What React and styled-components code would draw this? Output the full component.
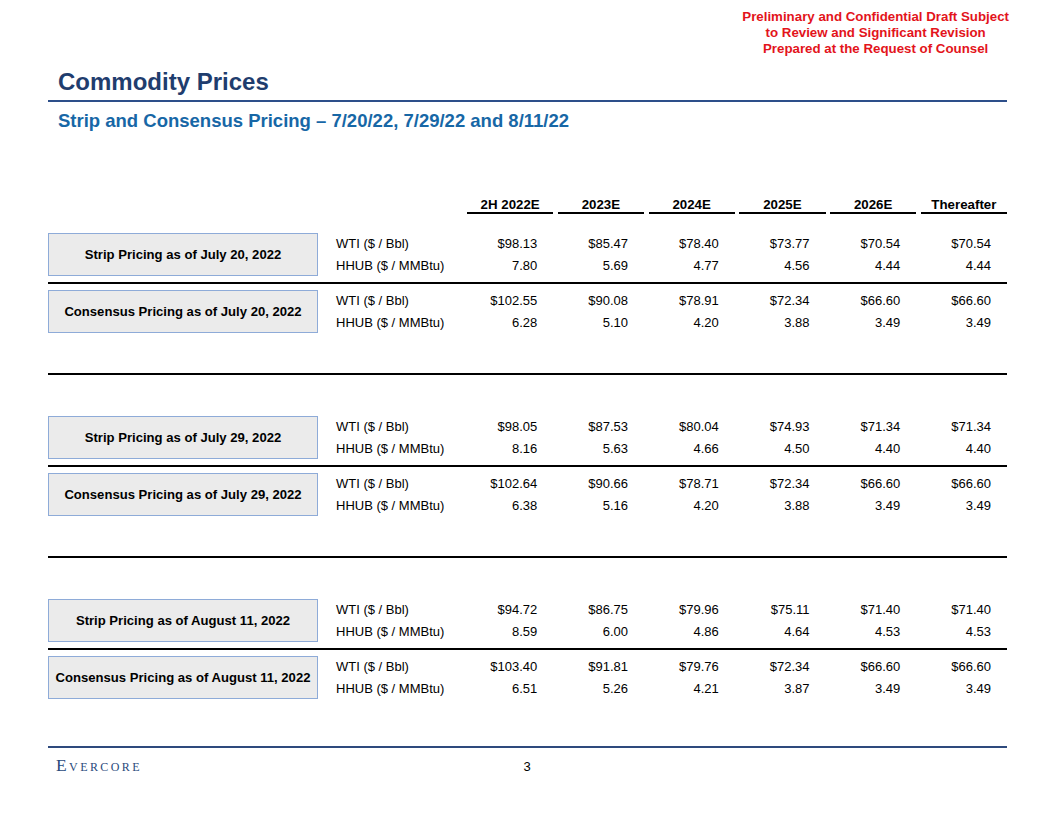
import React from "react";
import styled, { createGlobalStyle } from "styled-components";

const columns = ["2H 2022E", "2023E", "2024E", "2025E", "2026E", "Thereafter"];

const groups = [
  [
    {
      label: "Strip Pricing as of July 20, 2022",
      wti: ["$98.13", "$85.47", "$78.40", "$73.77", "$70.54", "$70.54"],
      hhub: ["7.80", "5.69", "4.77", "4.56", "4.44", "4.44"],
    },
    {
      label: "Consensus Pricing as of July 20, 2022",
      wti: ["$102.55", "$90.08", "$78.91", "$72.34", "$66.60", "$66.60"],
      hhub: ["6.28", "5.10", "4.20", "3.88", "3.49", "3.49"],
    },
  ],
  [
    {
      label: "Strip Pricing as of July 29, 2022",
      wti: ["$98.05", "$87.53", "$80.04", "$74.93", "$71.34", "$71.34"],
      hhub: ["8.16", "5.63", "4.66", "4.50", "4.40", "4.40"],
    },
    {
      label: "Consensus Pricing as of July 29, 2022",
      wti: ["$102.64", "$90.66", "$78.71", "$72.34", "$66.60", "$66.60"],
      hhub: ["6.38", "5.16", "4.20", "3.88", "3.49", "3.49"],
    },
  ],
  [
    {
      label: "Strip Pricing as of August 11, 2022",
      wti: ["$94.72", "$86.75", "$79.96", "$75.11", "$71.40", "$71.40"],
      hhub: ["8.59", "6.00", "4.86", "4.64", "4.53", "4.53"],
    },
    {
      label: "Consensus Pricing as of August 11, 2022",
      wti: ["$103.40", "$91.81", "$79.76", "$72.34", "$66.60", "$66.60"],
      hhub: ["6.51", "5.26", "4.21", "3.87", "3.49", "3.49"],
    },
  ],
];

const PricingBlock = ({ block }) => (
  <Block>
    <LabelBox>{block.label}</LabelBox>
    <RowLabel>WTI ($ / Bbl)</RowLabel>
    {block.wti.map((v, i) => (
      <Value key={"w" + i}>{v}</Value>
    ))}
    <RowLabel>HHUB ($ / MMBtu)</RowLabel>
    {block.hhub.map((v, i) => (
      <Value key={"h" + i}>{v}</Value>
    ))}
  </Block>
);

const App = () => {
  return (
    <>
      <GlobalStyle />
      <Page>
        <Confidential>
          Preliminary and Confidential Draft Subject
          <br />
          to Review and Significant Revision
          <br />
          Prepared at the Request of Counsel
        </Confidential>

        <TitleBar>
          <h1>Commodity Prices</h1>
        </TitleBar>
        <Subtitle>Strip and Consensus Pricing – 7/20/22, 7/29/22 and 8/11/22</Subtitle>

        <Table>
          <HeaderRow>
            <span />
            <span />
            {columns.map((c) => (
              <HeaderCell key={c}>{c}</HeaderCell>
            ))}
          </HeaderRow>

          {groups.map((g, gi) => (
            <Group key={gi} last={gi === groups.length - 1}>
              <PricingBlock block={g[0]} />
              <Divider />
              <PricingBlock block={g[1]} />
            </Group>
          ))}
        </Table>

        <Footer>
          <Logo>Evercore</Logo>
          <PageNum>3</PageNum>
          <span />
        </Footer>
      </Page>
    </>
  );
};

export default App;

// -------------------- Styles --------------------
const GlobalStyle = createGlobalStyle`
  html, body {
    margin: 0;
    padding: 0;
    background: #fff;
  }
  body {
    font-family: "Liberation Sans", Arial, sans-serif;
    color: #000;
  }
`;

const Page = styled.div`
  width: 1056px;
  height: 816px;
  box-sizing: border-box;
  display: flex;
  flex-direction: column;
  padding: 0 49px 0 48px;
  overflow: hidden;
`;

const Confidential = styled.div`
  align-self: flex-end;
  margin-top: 9px;
  margin-right: -2px;
  text-align: center;
  font-size: 13.3px;
  line-height: 16.2px;
  font-weight: bold;
  color: #e3141b;
`;

const TitleBar = styled.div`
  margin-top: 10px;
  padding: 0 0 4px 10px;
  border-bottom: 2px solid #2d4f8a;

  h1 {
    margin: 0;
    font-size: 24px;
    line-height: 28px;
    font-weight: bold;
    color: #1f3d6e;
  }
`;

const Subtitle = styled.h2`
  margin: 7px 0 0 10px;
  font-size: 18.5px;
  line-height: 24px;
  font-weight: bold;
  color: #1767a6;
`;

const Table = styled.div`
  margin-top: 64px;
  display: flex;
  flex-direction: column;
`;

const gridCols = `
  display: grid;
  grid-template-columns: 270px 1fr repeat(6, 90.75px);
`;

const HeaderRow = styled.div`
  ${gridCols}
  margin-bottom: 19px;
`;

const HeaderCell = styled.div`
  margin-left: 4.5px;
  text-align: center;
  font-size: 13.3px;
  line-height: 15px;
  font-weight: bold;
  border-bottom: 2px solid #000;
`;

const Group = styled.div`
  display: flex;
  flex-direction: column;
  padding-bottom: ${({ last }) => (last ? "0" : "40px")};
  margin-bottom: ${({ last }) => (last ? "0" : "41px")};
  border-bottom: ${({ last }) => (last ? "none" : "2px solid #000")};
`;

const Block = styled.div`
  ${gridCols}
  grid-template-rows: 22px 21px;
  font-size: 13px;
`;

const LabelBox = styled.div`
  grid-row: 1 / span 2;
  box-sizing: border-box;
  display: flex;
  align-items: center;
  justify-content: center;
  background: #ebebeb;
  border: 1.5px solid #8eabd8;
  font-size: 13.1px;
  font-weight: bold;
`;

const RowLabel = styled.div`
  padding-left: 18px;
  line-height: 21px;
  white-space: nowrap;
`;

const Value = styled.div`
  text-align: right;
  padding-right: 16px;
  line-height: 21px;
`;

const Divider = styled.div`
  height: 2px;
  background: #000;
  margin: 6px 0;
`;

const Footer = styled.div`
  margin-top: auto;
  height: 70px;
  box-sizing: border-box;
  border-top: 2.5px solid #2e4a7d;
  padding: 7px 0 0 8px;
  display: grid;
  grid-template-columns: 1fr auto 1fr;
  align-items: baseline;
  align-content: start;
`;

const Logo = styled.div`
  font-family: "Liberation Serif", "Times New Roman", serif;
  font-variant: small-caps;
  font-size: 17.5px;
  line-height: 20px;
  letter-spacing: 2.4px;
  color: #2b4a7c;
`;

const PageNum = styled.div`
  font-size: 13px;
  line-height: 20px;
  margin-left: -8px;
`;
